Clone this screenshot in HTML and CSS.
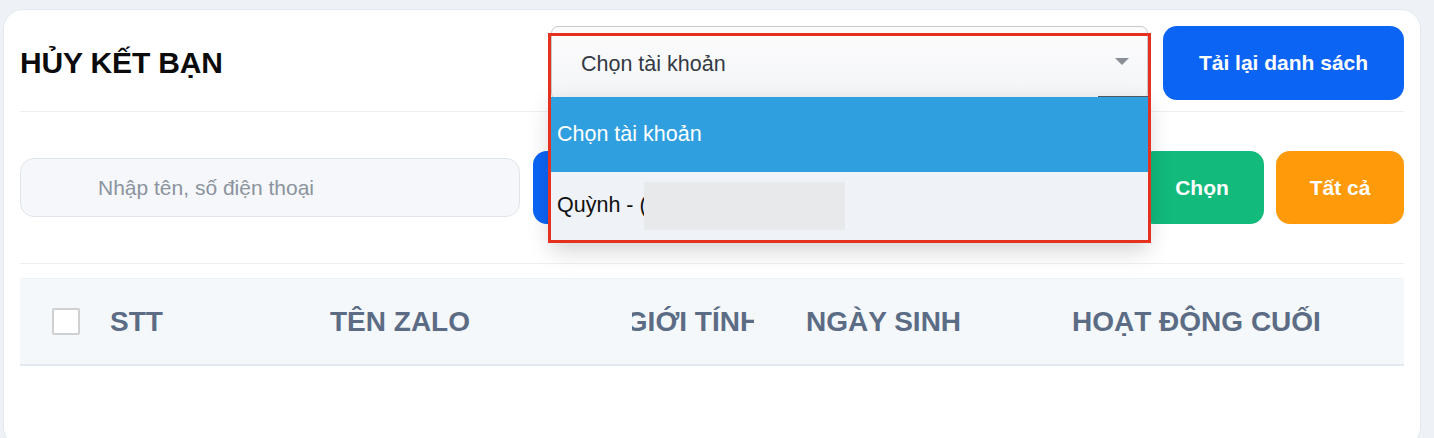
FILE: index.html
```html
<!DOCTYPE html>
<html lang="vi">
<head>
<meta charset="utf-8">
<title>Hủy kết bạn</title>
<link rel="stylesheet" href="styles.css">
</head>
<body>
<div class="card">
  <div class="header">
    <h1 class="title">HỦY KẾT BẠN</h1>
    <div class="select-wrap">
      <div class="select">
        <span class="select-text">Chọn tài khoản</span>
        <svg class="select-arrow" width="16" height="8" viewBox="0 0 16 8"><path d="M1 0 L15 0 L8 7 Z" fill="#8a8f96"/></svg>
      </div>
      <span class="select-edge"></span>
      <ul class="dropdown">
        <li class="option option-active">Chọn tài khoản</li>
        <li class="option">Quỳnh - (<span class="redact"></span></li>
      </ul>
      <div class="annot"></div>
    </div>
    <button class="btn btn-blue btn-reload">Tải lại danh sách</button>
  </div>

  <div class="search-row">
    <input class="search" type="text" placeholder="Nhập tên, số điện thoại">
    <button class="btn btn-blue btn-search">Tìm kiếm</button>
    <button class="btn btn-green btn-choose">Chọn</button>
    <button class="btn btn-orange btn-all">Tất cả</button>
  </div>

  <div class="table-head">
    <div class="th th-check"><span class="checkbox"></span></div>
    <div class="th th-stt">STT</div>
    <div class="th th-name">TÊN ZALO</div>
    <div class="th th-gender"><span>GIỚI TÍNH</span></div>
    <div class="th th-birth">NGÀY SINH</div>
    <div class="th th-last">HOẠT ĐỘNG CUỐI</div>
  </div>
</div>
</body>
</html>
```

FILE: styles.css
```css
* { box-sizing: border-box; }

html, body {
  margin: 0;
  padding: 0;
}

body {
  background: #eef2f7;
  font-family: "Liberation Sans", Arial, sans-serif;
  padding: 9px 13px 0 3px;
  height: 438px;
  overflow: hidden;
}

.card {
  background: #ffffff;
  border: 1px solid #e3e8ef;
  border-radius: 20px;
  padding: 16px 16px 80px 16px;
}

.header {
  display: flex;
  align-items: center;
  height: 86px;
  padding-bottom: 12px;
  border-bottom: 1px solid #eceff3;
}

.title {
  margin: 0;
  font-size: 30px;
  font-weight: 700;
  color: #0b0b0b;
  letter-spacing: -0.15px;
}

.select-wrap {
  position: relative;
  width: 597px;
  height: 74px;
  margin-left: auto;
  margin-right: 15px;
}

.select {
  display: flex;
  align-items: center;
  height: 74px;
  padding-left: 29px;
  padding-right: 17px;
  border: 1px solid #c9cacc;
  border-radius: 7px;
  background: linear-gradient(#fcfcfd, #f4f5f7);
  font-size: 21.5px;
  color: #333a44;
}

.select-text {
  flex: 1;
  padding-top: 4px;
}

.select-arrow {
  display: block;
  margin-bottom: 2px;
}

.select-edge {
  position: absolute;
  top: 70px;
  right: 0;
  width: 50px;
  height: 2px;
  background: #555a60;
}

.dropdown {
  position: absolute;
  top: 71px;
  left: 0;
  right: 0;
  margin: 0;
  padding: 0 0 2px 0;
  list-style: none;
  background: #eff3f8;
  box-shadow: 0 8px 22px rgba(0, 0, 0, 0.18);
  z-index: 2;
}

.option {
  display: flex;
  align-items: center;
  height: 68px;
  padding-left: 6px;
  font-size: 21.5px;
  color: #111111;
  background: #eff3f8;
}

.option-active {
  height: 75px;
  background: #309fdf;
  color: #ffffff;
}

.redact {
  display: inline-block;
  width: 201px;
  height: 48px;
  margin-left: -3px;
  background: #e8e9ea;
}

.annot {
  position: absolute;
  left: -3px;
  top: 7px;
  width: 603px;
  height: 210px;
  border: 3px solid #e5311f;
  z-index: 3;
  pointer-events: none;
}

.btn {
  border: 0;
  border-radius: 14px;
  color: #ffffff;
  font-family: "Liberation Sans", Arial, sans-serif;
  font-weight: 700;
  font-size: 21px;
  cursor: pointer;
}

.btn-blue { background: #0c64f5; }
.btn-green { background: #12ba7c; }
.btn-orange { background: #ff9b0b; }

.btn-reload {
  width: 241px;
  height: 74px;
  padding-top: 2px;
}

.search-row {
  display: flex;
  align-items: center;
  gap: 12px;
  margin-top: 39px;
  padding-bottom: 39px;
  border-bottom: 1px solid #eceff3;
}

.search {
  width: 500px;
  height: 59px;
  margin-right: 1px;
  padding-left: 77px;
  border: 1px solid #dfe4ea;
  border-radius: 14px;
  background: #f5f7fa;
  font-family: "Liberation Sans", Arial, sans-serif;
  font-size: 21px;
  color: #333;
  outline: none;
}

.search::placeholder {
  color: #8b939e;
}

.btn-search {
  flex: 1;
  height: 73px;
}

.btn-choose {
  width: 124px;
  height: 73px;
}

.btn-all {
  width: 128px;
  height: 73px;
}

.table-head {
  display: grid;
  grid-template-columns: 90px 220px 302px 122px 318px 1fr;
  align-items: center;
  height: 88px;
  margin-top: 14px;
  background: #f5f8fb;
  border-top: 1px solid #f0f3f6;
  border-bottom: 2px solid #e3e8ee;
}

.th {
  font-size: 28px;
  font-weight: 700;
  color: #5b6c84;
  white-space: nowrap;
}

.th-check {
  padding-left: 32px;
  display: flex;
  align-items: center;
}

.checkbox {
  display: block;
  width: 28px;
  height: 27px;
  border: 2px solid #cfd0d2;
  border-radius: 2px;
  background: #ffffff;
}

.th-gender {
  display: flex;
  justify-content: center;
  overflow: hidden;
}

.th-gender span {
  flex-shrink: 0;
}

.th-birth {
  padding-left: 52px;
}
```
